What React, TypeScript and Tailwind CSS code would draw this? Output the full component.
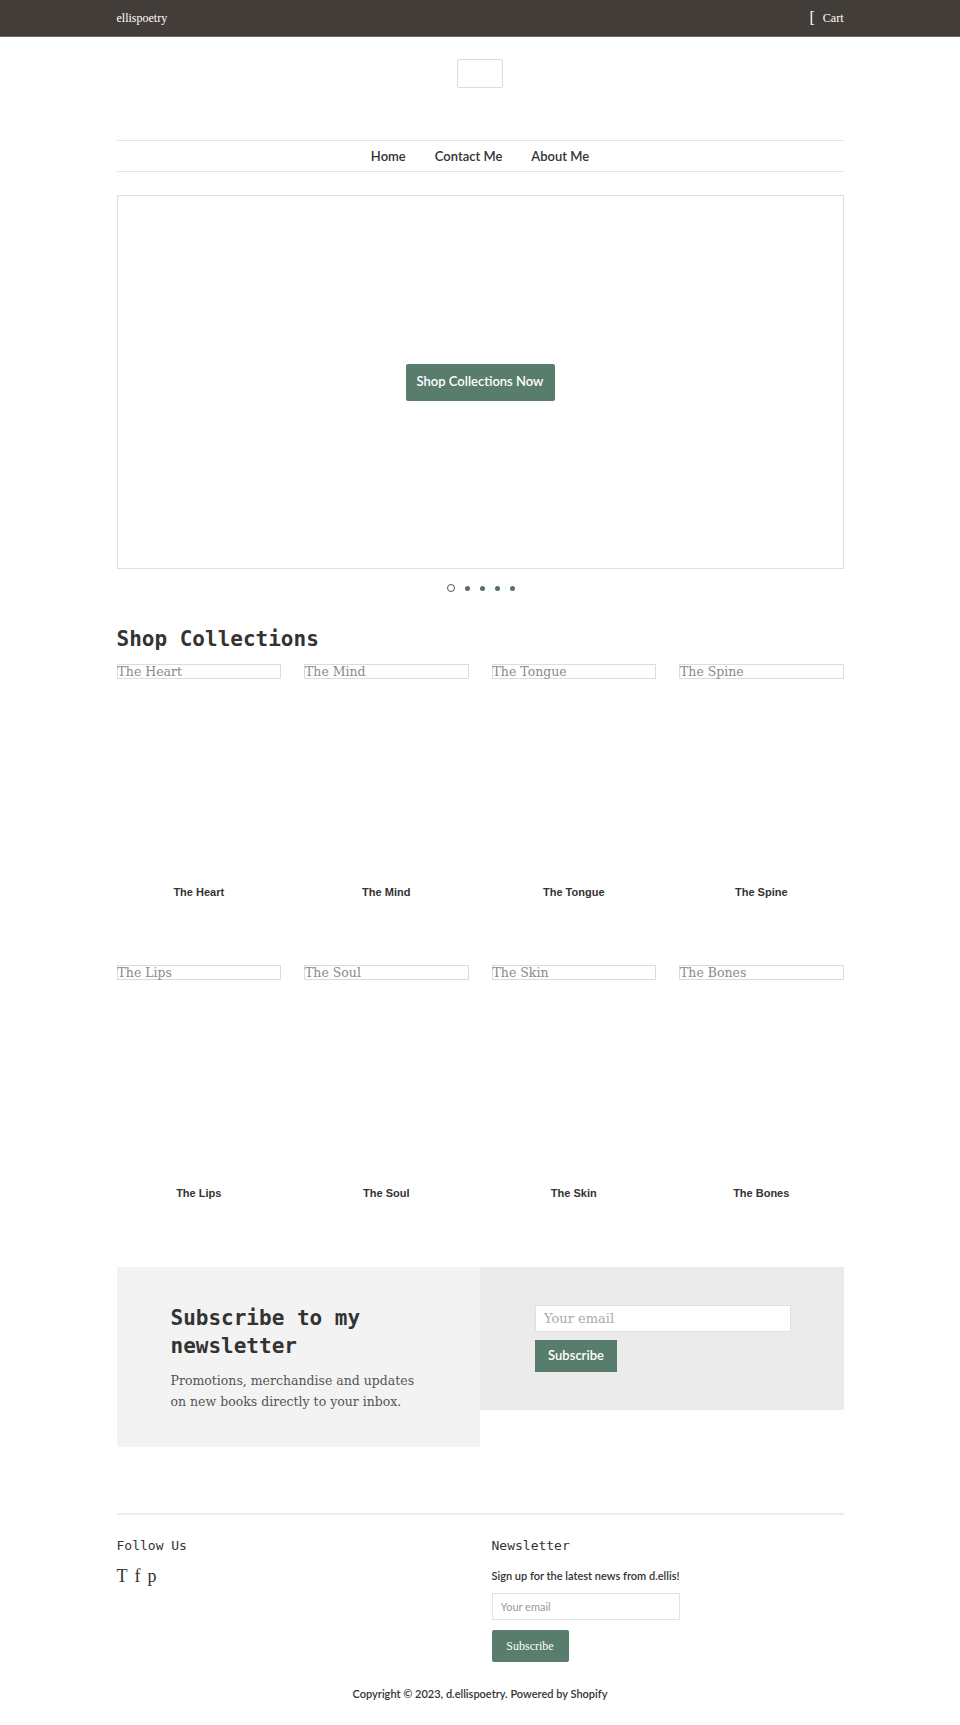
import React from 'react';

const collections = [
  'The Heart',
  'The Mind',
  'The Tongue',
  'The Spine',
  'The Lips',
  'The Soul',
  'The Skin',
  'The Bones',
];

const serif = "font-['DejaVu_Serif',serif]";
const mono = "font-['DejaVu_Sans_Mono',monospace]";
const gothic = "font-['Lato',sans-serif]";

export default function App() {
  return (
    <div className="min-h-screen bg-white text-[#333]">
      {/* Top bar */}
      <div className="h-[37px] bg-[#433d39] border-b border-[#6f6a66]">
        <div className="w-[727px] mx-auto h-full flex items-center justify-between">
          <a className="font-['Liberation_Serif',serif] text-[12px] text-white">ellispoetry</a>
          <a className="flex items-center gap-[8px] font-['Liberation_Serif',serif] text-white">
            <span className="text-[16px] leading-none">[</span>
            <span className="text-[12px]">Cart</span>
          </a>
        </div>
      </div>

      <div className="w-[727px] mx-auto">
        {/* Logo */}
        <div className="pt-[22px] flex justify-center">
          <div className="w-[46px] h-[29px] border border-[#dcdcdc] rounded-[2px]" />
        </div>

        {/* Nav */}
        <nav className={`mt-[52px] h-[32px] pt-[2px] border-y border-[#e6e6e6] flex items-center justify-center gap-[29px] ${gothic} font-semibold text-[13px] text-[#333]`}>
          <a>Home</a>
          <a>Contact Me</a>
          <a>About Me</a>
        </nav>

        {/* Slideshow */}
        <div className="mt-[23px] h-[374px] border border-[#dedede] flex items-center justify-center">
          <button className={`w-[149px] h-[37px] bg-[#587d6c] text-white text-[13px] font-semibold rounded-[2px] ${gothic}`}>
            Shop Collections Now
          </button>
        </div>

        {/* Slide dots */}
        <div className="mt-[15px] flex items-center justify-center gap-[10px] pl-[2px]">
          <span className="w-[8px] h-[8px] rounded-full border-[1.5px] border-[#555]" />
          <span className="w-[5px] h-[5px] rounded-full bg-[#587064]" />
          <span className="w-[5px] h-[5px] rounded-full bg-[#587064]" />
          <span className="w-[5px] h-[5px] rounded-full bg-[#587064]" />
          <span className="w-[5px] h-[5px] rounded-full bg-[#587064]" />
        </div>

        {/* Shop Collections */}
        <h2 className={`mt-[33px] text-[21px] leading-[28px] font-bold text-[#333] ${mono}`}>Shop Collections</h2>

        <div className="mt-[11px] grid grid-cols-4 gap-x-[23px] gap-y-[66px]">
          {collections.map((name) => (
            <div key={name}>
              <div className="h-[221px]">
                <div className={`h-[15px] border border-[#dcdcdc] text-[12.5px] leading-[14px] text-[#8a8a8a] overflow-visible whitespace-nowrap ${serif}`}>
                  {name}
                </div>
              </div>
              <p className="text-center text-[11px] leading-[14px] font-bold text-[#333] font-['Liberation_Sans',sans-serif]">
                {name}
              </p>
            </div>
          ))}
        </div>

        {/* Newsletter band */}
        <div className="mt-[67px] flex items-start">
          <div className="w-1/2 bg-[#f3f3f3] pl-[54px] pr-[60px] pt-[37px] pb-[35px]">
            <h3 className={`text-[21px] leading-[28px] font-bold text-[#333] ${mono}`}>
              Subscribe to my newsletter
            </h3>
            <p className={`mt-[10px] text-[12.5px] leading-[21px] text-[#555] ${serif}`}>
              Promotions, merchandise and updates on new books directly to your inbox.
            </p>
          </div>
          <div className="w-1/2 bg-[#ebebeb] pl-[55px] pt-[38px] pb-[38px]">
            <input
              placeholder="Your email"
              className={`block w-[256px] h-[27px] bg-white border border-[#e0e0e0] px-[8px] text-[13px] placeholder:text-[#aaa] ${serif}`}
            />
            <button className={`mt-[8px] w-[82px] h-[32px] bg-[#587d6c] text-white text-[13px] font-semibold ${gothic}`}>
              Subscribe
            </button>
          </div>
        </div>

        {/* Footer */}
        <footer className="mt-[66px] border-t-2 border-[#ececec] pt-[22px] pb-[26px]">
          <div className="grid grid-cols-2 gap-x-[23px]">
            <div>
              <h4 className={`text-[13px] leading-[18px] text-[#333] ${mono}`}>Follow Us</h4>
              <div className="mt-[10px] flex items-center gap-[7px] font-['Liberation_Serif',serif] text-[18px] leading-[22px] text-[#333]">
                <a>T</a>
                <a>f</a>
                <a>p</a>
              </div>
            </div>
            <div>
              <h4 className={`text-[13px] leading-[18px] text-[#333] ${mono}`}>Newsletter</h4>
              <p className={`mt-[14px] text-[11px] leading-[14px] font-semibold text-[#333] ${gothic}`}>
                Sign up for the latest news from d.ellis!
              </p>
              <input
                placeholder="Your email"
                className={`mt-[10px] block w-[188px] h-[27px] bg-white border border-[#e3e3e3] px-[8px] text-[11px] placeholder:text-[#999] ${gothic}`}
              />
              <button className="mt-[10px] w-[77px] h-[32px] bg-[#587d6c] text-white text-[12px] font-['Liberation_Serif',serif] rounded-[2px]">
                Subscribe
              </button>
            </div>
          </div>
          <p className={`mt-[25px] text-center text-[11px] leading-[14px] font-semibold text-[#333] ${gothic}`}>
            Copyright © 2023, d.ellispoetry. Powered by Shopify
          </p>
        </footer>
      </div>
    </div>
  );
}
